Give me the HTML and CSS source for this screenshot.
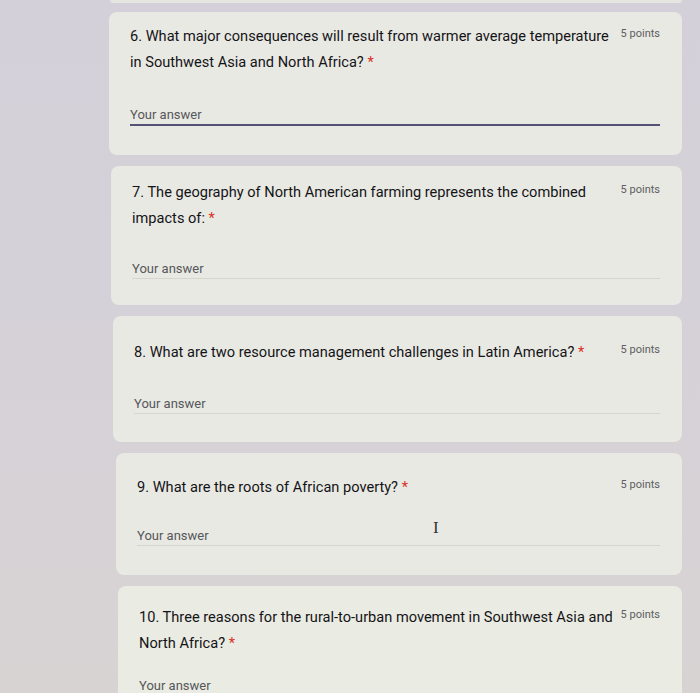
FILE: index.html
```html
<!DOCTYPE html>
<html lang="en">
<head>
<meta charset="utf-8">
<title>Form questions</title>
<link rel="stylesheet" href="styles.css">
</head>
<body>
<div class="page">
  <div class="stack">
    <div class="card-tail"></div>

    <section class="card c1">
      <div class="title-row">
        <div class="question">6. What major consequences will result from warmer average temperature in Southwest Asia and North Africa? <span class="req">*</span></div>
        <div class="points">5 points</div>
      </div>
      <div class="answer active"><span class="placeholder">Your answer</span></div>
    </section>

    <section class="card c2">
      <div class="title-row">
        <div class="question">7. The geography of North American farming represents the combined impacts of: <span class="req">*</span></div>
        <div class="points">5 points</div>
      </div>
      <div class="answer"><span class="placeholder">Your answer</span></div>
    </section>

    <section class="card c3">
      <div class="title-row">
        <div class="question">8. What are two resource management challenges in Latin America? <span class="req">*</span></div>
        <div class="points">5 points</div>
      </div>
      <div class="answer"><span class="placeholder">Your answer</span></div>
    </section>

    <section class="card c4">
      <div class="title-row">
        <div class="question">9. What are the roots of African poverty? <span class="req">*</span></div>
        <div class="points">5 points</div>
      </div>
      <div class="answer"><span class="placeholder">Your answer</span><span class="ibeam">I</span></div>
    </section>

    <section class="card c5">
      <div class="title-row">
        <div class="question">10. Three reasons for the rural-to-urban movement in Southwest Asia and North Africa? <span class="req">*</span></div>
        <div class="points">5 points</div>
      </div>
      <div class="answer"><span class="placeholder">Your answer</span></div>
    </section>
  </div>
</div>
</body>
</html>
```

FILE: styles.css
```css
html, body {
  margin: 0;
  padding: 0;
}

body {
  width: 700px;
  height: 693px;
  overflow: hidden;
  background: linear-gradient(180deg, #d3d0d9 0%, #d5d1d8 45%, #d8d3d3 100%);
  font-family: Roboto, "Noto Sans", "Liberation Sans", sans-serif;
  color: #202124;
}

.page {
  display: flex;
  justify-content: flex-end;
  padding-right: 18px;
}

.stack {
  display: flex;
  flex-direction: column;
  gap: 11px;
  width: 573px;
}

.card-tail {
  height: 3px;
  margin-bottom: -2px;
  margin-left: 1px;
  background: #e6e6e1;
  border-radius: 0 0 6px 6px;
}

.card {
  --pt: 12px;
  --gap: 31px;
  background: #e9e9e3;
  border-radius: 8px;
  padding: var(--pt) 22px 0 21px;
  box-sizing: border-box;
  display: flex;
  flex-direction: column;
}

.c1 { height: 143px; --pt: 11px; --gap: 31px; }
.c2 { height: 139px; margin-left: 2px; --pt: 13px; --gap: 29px; }
.c3 { height: 126px; margin-left: 4px; --pt: 23px; --gap: 30px; }
.c4 { height: 122px; margin-left: 7px; --pt: 21px; --gap: 27px; }
.c5 { height: 140px; margin-left: 9px; --pt: 18px; --gap: 21px; background: #eaebe2; }

.title-row {
  display: flex;
  align-items: flex-start;
}

.question {
  flex: 1;
  font-size: 14.6px;
  line-height: 26px;
  font-weight: 400;
  color: #141418;
}

.req {
  color: #d93025;
}

.points {
  flex: none;
  margin-left: 4px;
  margin-top: 1px;
  font-size: 11px;
  line-height: 20px;
  color: #5c5e62;
}

.answer {
  margin-top: var(--gap);
  height: 18px;
  border-bottom: 1px solid #d6d6d0;
  display: flex;
  align-items: center;
  position: relative;
}

.answer.active {
  border-bottom: 2px solid #55527a;
}

.placeholder {
  font-size: 13px;
  line-height: 16px;
  color: #55575b;
}

.ibeam {
  position: absolute;
  left: 296px;
  top: -9px;
  font-family: "Liberation Serif", serif;
  font-size: 17px;
  line-height: 20px;
  color: #333;
}
```
